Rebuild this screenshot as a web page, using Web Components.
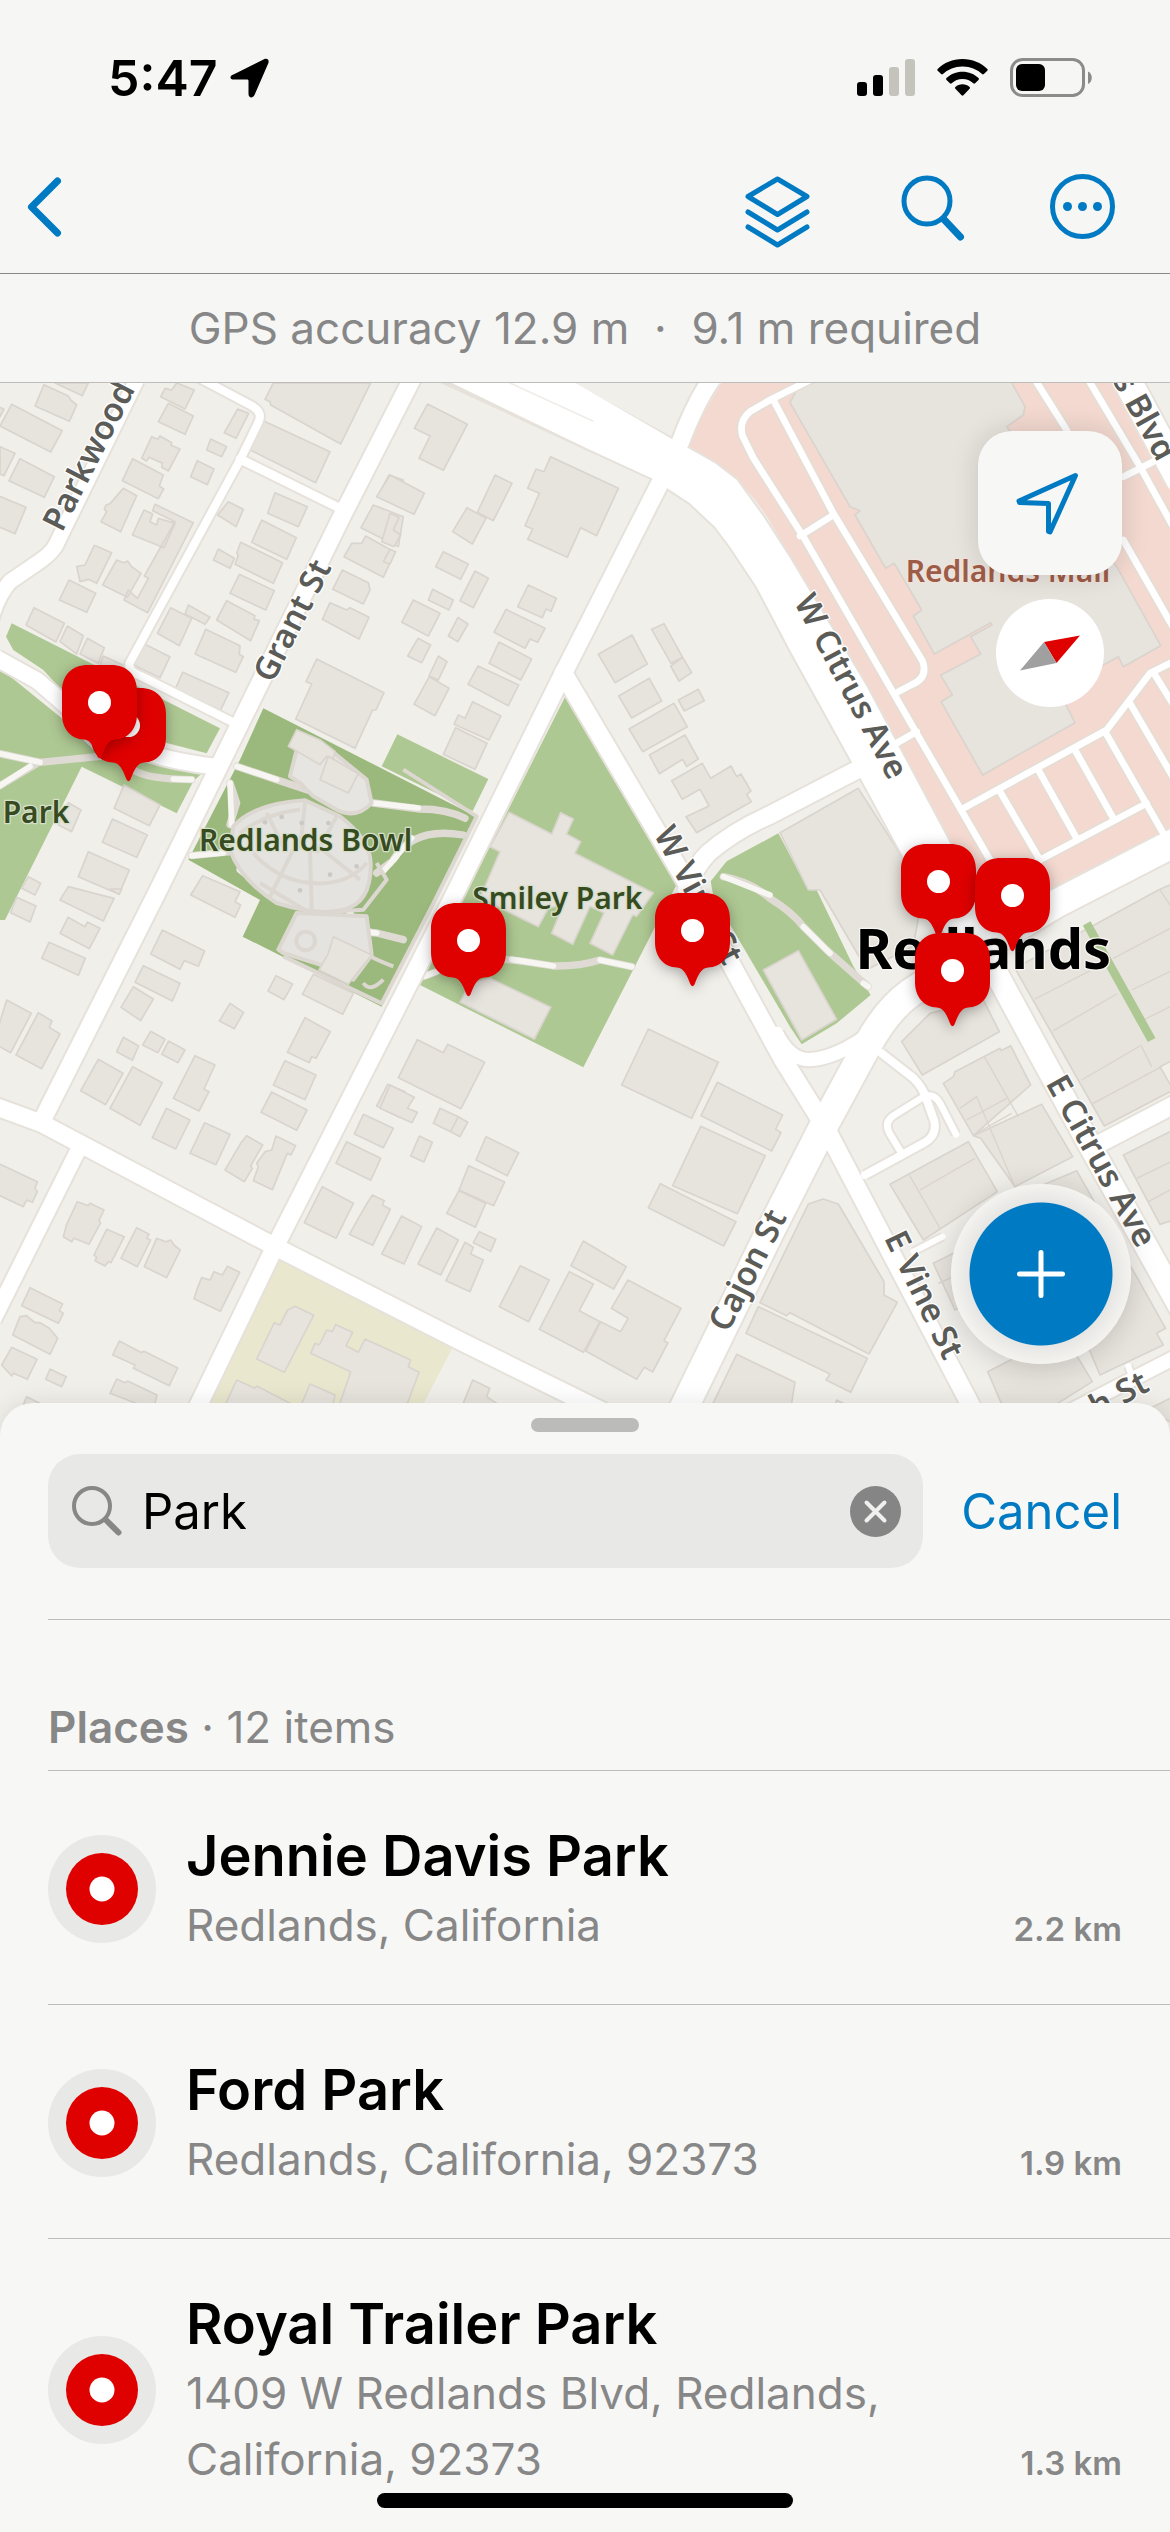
<!DOCTYPE html>
<html lang="en">
<head>
<meta charset="utf-8">
<meta name="viewport" content="width=device-width, initial-scale=1">
<title>Map</title>
<style>
  html, body { margin: 0; height: 100%; }
  body {
    font-family: Inter, "Liberation Sans", sans-serif;
    color: #000;
    background: #f7f7f5;
  }
</style>
</head>
<body>
<map-app>
  <status-bar slot="top">5:47</status-bar>
  <nav-bar slot="top"></nav-bar>
  <accuracy-banner slot="top">GPS accuracy 12.9 m &nbsp;·&nbsp; 9.1 m required</accuracy-banner>
  <street-map slot="map">
    <map-pin x="128" y="398"></map-pin>
    <map-pin x="99" y="375"></map-pin>
    <map-pin x="468" y="613"></map-pin>
    <map-pin x="692" y="603"></map-pin>
    <map-pin x="938" y="554"></map-pin>
    <map-pin x="1012" y="568"></map-pin>
    <map-pin x="952" y="643"></map-pin>
  </street-map>
  <result-sheet slot="sheet">
    <search-field slot="search" value="Park"></search-field>
    <span slot="title">Places</span>
    <span slot="count">12 items</span>
    <place-row>
      <span slot="name">Jennie Davis Park</span>
      <span slot="address">Redlands, California</span>
      <span slot="distance">2.2 km</span>
    </place-row>
    <place-row>
      <span slot="name">Ford Park</span>
      <span slot="address">Redlands, California, 92373</span>
      <span slot="distance">1.9 km</span>
    </place-row>
    <place-row>
      <span slot="name">Royal Trailer Park</span>
      <span slot="address">1409 W Redlands Blvd, Redlands, California, 92373</span>
      <span slot="distance">1.3 km</span>
    </place-row>
  </result-sheet>
</map-app>

<script>
function define(name, html, setup) {
  const template = document.createElement('template')
  template.innerHTML = html
  customElements.define(name, class extends HTMLElement {
    constructor() {
      super()
      this.attachShadow({ mode: 'open' }).appendChild(template.content.cloneNode(true))
    }

    connectedCallback() {
      if (setup) setup(this, this.shadowRoot)
    }
  })
}

define('map-app', `
  <style>
    :host {
      display: flex;
      flex-direction: column;
      position: relative;
      min-height: 100vh;
      overflow: hidden;
    }
    .sheet { flex: 1; display: grid; grid-template-columns: minmax(0, 1fr); margin-top: -30px; position: relative; }
    .home {
      position: absolute;
      left: 50%;
      bottom: 24px;
      width: 416px;
      height: 15px;
      margin-left: -208px;
      border-radius: 8px;
      background: #000;
    }
  </style>
  <slot name="top"></slot>
  <slot name="map"></slot>
  <div class="sheet"><slot name="sheet"></slot></div>
  <div class="home"></div>
`)

define('status-bar', `
  <style>
    :host {
      display: flex;
      align-items: center;
      justify-content: space-between;
      height: 60px;
      padding: 48px 78px 30px 108px;
      background: #f6f6f4;
      font-size: 50px;
      line-height: 60px;
      font-weight: 600;
    }
    div { display: flex; align-items: center; gap: 12px; }
    .right { gap: 22px; }
    svg { display: block; }
  </style>
  <div>
    <slot></slot>
    <svg width="40" height="40" viewBox="0 0 40 40"><path d="M3.5 16.5 34 1.3c3.2-1.5 5.6.7 4.3 4L24.5 37c-1.6 3.6-6 3-6-1V23c0-1-.5-1.500-1.500-1.500H4c-4.500 0-4.800-3.500-.5-5z"/></svg>
  </div>
  <div class="right">
    <svg width="58" height="38" viewBox="0 0 58 38">
      <rect y="23" width="10" height="14" rx="3"/>
      <rect x="16" y="16" width="10" height="21" rx="3"/>
      <rect x="32" y="8" width="10" height="29" rx="3" fill="#c4c4bc"/>
      <rect x="48" width="10" height="37" rx="3" fill="#c4c4bc"/>
    </svg>
    <svg width="51" height="38" viewBox="0 0 51 38">
      <path d="M25.5 0C35.5 0 44 3.7 50.3 10c.6.6.6 1.2 0 1.8l-3.4 3.3c-.6.6-1.2.6-1.8 0A28 28 0 0 0 25.5 7.5 28 28 0 0 0 5.9 15.1c-.6.6-1.2.6-1.8 0L.7 11.8c-.6-.6-.6-1.2 0-1.8C7 3.7 15.5 0 25.5 0z"/>
      <path d="M25.5 12.8c6.3 0 12 2.3 16 6.3.6.6.6 1.2 0 1.8l-3.4 3.4c-.6.6-1.2.6-1.8 0a15.5 15.5 0 0 0-21.6 0c-.6.6-1.2.6-1.8 0l-3.4-3.4c-.6-.6-.6-1.2 0-1.8 4-4 9.7-6.3 16-6.3z"/>
      <path d="M25.5 25.2c2.8 0 5.3 1 7.1 2.7.6.6.6 1.2 0 1.8l-6.2 6.6c-.6.6-1.2.6-1.8 0l-6.2-6.6c-.6-.6-.6-1.2 0-1.8 1.8-1.7 4.3-2.7 7.1-2.7z"/>
    </svg>
    <svg width="82" height="40" viewBox="0 0 82 40">
      <rect x="1.5" y="1.5" width="72" height="36" rx="11" fill="none" stroke="#8b8b8c" stroke-width="3"/>
      <rect x="6" y="6" width="29" height="27" rx="6"/>
      <path d="M78 13.5c5 2 5 10.5 0 12.5z" fill="#8b8b8c"/>
    </svg>
  </div>
`)

define('nav-bar', `
  <style>
    :host {
      display: flex;
      align-items: center;
      height: 135px;
      padding: 0 51px 0 9px;
      background: #f6f6f4;
      border-bottom: 1px solid #88888a;
    }
    .tools { display: flex; gap: 81px; margin-left: auto; }
    button { display: block; margin: 0; padding: 0; border: 0; background: none; color: #007ac2; }
    svg { display: block; fill: none; stroke: currentColor; stroke-width: 5; stroke-linecap: round; stroke-linejoin: round; }
  </style>
  <button aria-label="Back">
    <svg width="72" height="84" viewBox="0 0 72 84"><path d="M48.500 17 22.500 43l26 26" stroke-width="7"/></svg>
  </button>
  <div class="tools">
    <button aria-label="Layers">
      <svg width="72" height="84" viewBox="0 0 72 84">
        <path d="M36.500 15 66 32.500 36.500 50.500 7 32.500zM7 48l29.500 18L66 48M7 63l29.500 18L66 63"/>
      </svg>
    </button>
    <button aria-label="Search">
      <svg width="72" height="84" viewBox="0 0 72 84">
        <circle cx="33" cy="37" r="23"/>
        <path d="m50.500 56 16 17" stroke-width="7"/>
      </svg>
    </button>
    <button aria-label="More">
      <svg width="72" height="84" viewBox="0 0 72 84">
        <circle cx="35.500" cy="42.500" r="30"/>
        <g fill="#007ac2" stroke="none"><circle cx="20.500" cy="42.500" r="4.500"/><circle cx="35.500" cy="42.500" r="4.500"/><circle cx="50.500" cy="42.500" r="4.500"/></g>
      </svg>
    </button>
  </div>
`)

define('accuracy-banner', `
  <style>
    :host {
      display: block;
      padding: 21px 24px;
      background: #f6f6f4;
      border-bottom: 1px solid #bcbcba;
      color: #878788;
      font-size: 44px;
      line-height: 66px;
      text-align: center;
    }
  </style>
  <slot></slot>
`)

define('map-pin', `
  <style>
    /* anchored at its tip */
    :host { position: absolute; width: 75px; height: 93px; margin: -93px 0 0 -37px; }
    svg { display: block; overflow: visible; filter: drop-shadow(0 3px 7px rgba(0, 0, 0, .32)); }
  </style>
  <svg width="75" height="93" viewBox="0 0 75 93">
    <path fill="#df0000" d="M26 0h23c16 0 26 10 26 26v23c0 15-9 25-22 25.500-7 .5-10 8-13.500 17Q37.500 95 35.500 91.500C32 82.500 29 75 22 74.500 9 74 0 64 0 49V26C0 10 10 0 26 0z"/>
    <circle cx="37.500" cy="37.500" r="11.500" fill="#fff"/>
  </svg>
`, el => {
  // x / y are in the map's own 1170 x 1050 grid
  el.style.left = `calc(${el.getAttribute('x')} / 1170 * 100%)`
  el.style.top = `calc(${el.getAttribute('y')} / 1050 * 100%)`
})

// Streets: [path, width]. Each is stroked twice, casing first.
const streets = [
  ['M410-9 165 491Q150 515 110 541L30 596Q-10 641-30 721', 44],
  ['M590-19 755 68Q790 88 775 118L720 231 388 841Q385 865 420 878L700 1018', 24],
  ['M720 228 1020 376', 26],
  ['M-10 826 110 892C230 985 300 1110 640 1150', 48],
  ['M1240-20 1030 391 475 1521 125 2215', 52],
  ['M240 2290-20 2810', 46],
  ['M-20 2168 125 2221 825 2591 1385 2876 1960 3160', 52],
  ['M1985 290 1680 891 1360 1541 825 2591 550 3160', 52],
  ['M1690 871 2050 1481 2350 2031 2475 2231 2940 3120', 54],
  ['M2000 3180 2310 2546 2475 2221 2600 1991Q2660 1881 2730 1831L2870 1741 3170 1561 3530 1376', 84],
  ['M2570 1161 2310 1296Q2200 1345 2125 1410 2085 1450 2060 1520', 52],
  ['M2330 1951Q2370 2032 2430 2030 2510 2025 2610 1951', 40],
  ['M2900 1600 3000 1791 3255 2261 3550 2790', 68],
  ['M3300 2281 3530 2161', 52],
  ['M3200 3090 3530 2920', 42],
  ['M2135-12Q2085 60 2040 180', 52],
  ['M3375-20 3540 290', 84],
  ['M2645 2011 2740 2085Q2770 2115 2780 2150L2803 2215Q2812 2258 2770 2281L2595 2376', 24],
  ['M2868 2254 2820 2161Q2800 2125 2765 2145L2685 2195Q2650 2215 2668 2250L2705 2311', 20],
  ['M2740 2606 2828 2561', 18],
  ['M3385 2950 3400 2990', 18]
]

const drives = `
  M2440-14 2310 51 2250 86Q2215 115 2228 160L2260 225 2410 461 2750 1051 3010 1500
  M2320 51 2500 391 2768 835Q2785 885 2735 905L2690 929 M2500 396 2400 459 M2750 1046 2680 1086
  M3105-10 3200 141 M3265-10 3420 251 3530 450 M3370 281 3470 231 M3370 471 3530 751
  M2890 1276 3320 1041 3450 871 3530 831 M3000 1226 3120 1431 M3115 1161 3230 1366
  M3225 1101 3340 1306 M3315 1046 3490 1351 M3390 961 3530 1201 M3465 876 3530 981
  M3100 1441 3440 1261`

const buildings = [
  [0, -9, `M132 14 205 48 212 60 230 75 208 124 105 78zM35 73 187 152 152 216 0 138zM165 9 247 47 265 9zM-5 80 12 88 0 110z
    M0 200 45 220 12 287 0 282zM60 236 163 290 133 352 27 302zM-5 347 78 382 45 461-5 440zM530 9 583 30 555 87 482 50 495 25 515 30z
    M505 70 580 108 555 163 475 125zM713 87 746 100 708 175 673 158zM632 177 680 200 665 230 620 210zM592 242 642 267 622 314 572 290z
    M455 170 473 178 480 168 515 188 513 196 540 207 505 273 485 262 487 250 447 232 440 243 425 235zM398 236 490 285 478 318 491 327 475 356 367 302z
    M370 325 410 347 362 455 303 425 320 395 313 388 318 375 330 371zM432 390 458 402 450 425 470 435 475 415 525 430 492 503 397 465z
    M465 373 580 428 443 698 372 660 385 630 412 655 445 595 433 588 525 425 458 392zM283 496 335 518 290 610 265 598 240 605 230 560 255 555z
    M350 540 372 548 383 543 395 560 423 580 382 652 308 615zM207 600 287 640 260 697 178 660zM102 683 193 730 168 786 78 735z
    M202 738 250 767 230 822 180 785zM262 775 313 803 295 850 240 822zM310 828 390 865 370 900 295 870zM685 365 730 388 708 440 653 405z
    M825 338 922 380 895 440 803 400zM785 420 889 473 860 538 755 487zM655 507 703 535 690 565 640 540zM722 487 848 548 820 610 705 553 715 525 710 520z
    M718 583 823 632 797 690 690 640zM680 662 765 707 762 718 778 722 752 782 650 720zM565 675 630 712 615 733 555 702zM512 683 575 715 538 797 472 760z
    M617 748 720 797 718 823 730 830 707 877 585 822zM433 792 510 830 480 893 400 855zM548 877 687 938 662 990 622 972 615 982 520 940z
    M820 9 1112 9 1022 192 812 75 810 65 795 58zM790 122 990 215 947 308 745 207zM1167 285 1210 300 1200 380 1135 347z
    M1120 375 1210 410 1195 500 1083 443zM1097 468 1185 517 1150 592 1032 530 1055 490 1085 490zM1027 570 1105 608 1110 630 1090 672 998 628z
    M990 668 1040 690 1050 683 1107 712 1077 777 967 718zM950 837 1152 938 1128 990 1118 990 1065 1105 887 1017 935 912 918 905z
    M372 1215 480 1275 448 1337 342 1285zM337 1317 442 1365 410 1432 307 1387zM265 1415 388 1470 357 1543 235 1490zM205 1268 243 1290 215 1355 175 1335z
    M85 1490 122 1510 105 1545 65 1525zM608 1487 720 1535 705 1565 722 1575 705 1612 572 1545z`],
  [1170, -9, `M113 72 232 133 160 271 87 235 120 168 73 145zM0 285 103 340 72 403-40 350zM0 400 27 412 10 450 32 465 12 500-25 485z
    M0 508 17 515 0 552-20 545zM315 285 366 310 310 422 262 397zM231 383 288 415 247 492 188 455z
    M482 230 685 325 620 467 572 443 532 532 413 478 428 447 405 437 448 340 413 325 438 267 462 275zM160 515 235 552 212 598 137 560z
    M255 573 295 595 250 683 210 662zM128 628 190 660 177 690 115 660zM70 660 150 700 115 768 35 727zM204 712 234 732 204 785 175 768z
    M84 775 122 795 95 848 53 828zM145 828 171 845 145 900 117 888zM118 890 177 925 135 1007 72 973z
    M415 615 499 655 483 694 468 687 457 713 383 680zM348 688 465 745 443 787 420 777 405 805 312 757zM327 786 425 837 392 900 297 850z
    M264 858 386 915 355 977 234 913zM248 965 333 1008 297 1080 192 1033 205 1005 225 1015zM197 1043 291 1090 255 1168 160 1123z
    M726 765 772 852 675 908 625 823zM822 731 878 832 843 850 785 748zM878 832 905 878 867 903 842 858zM778 895 815 963 725 1014 686 948z
    M925 928 943 962 883 993 865 960zM852 970 892 1040 758 1115 717 1047zM885 1065 925 1137 890 1160 878 1138 808 1181 778 1125z
    M937 1150 962 1195 1023 1158 1040 1190 1053 1182 1083 1233 1070 1243 1084 1265 920 1358 888 1310 957 1278 930 1228 877 1258 845 1202z`],
  [0, 1521, `M205-10 342 25 310 93 180 30zM330-3 365-3 357 13zM50 22 108 48 90 96 32 68zM204 82 255 110 262 96 300 115 268 176 180 130z
    M147 157 256 205 235 256 125 205zM20 330 94 370 32 488-20 460zM115 368 156 393 148 412 180 432 125 536 48 495z
    M487 120 614 183 595 229 553 212 540 238 452 192zM430 227 540 280 517 333 405 277zM400 290 460 327 422 392 363 352z
    M828 257 878 282 852 329 804 303zM690 340 731 367 703 416 658 393zM370 442 416 468 397 511 350 485zM452 424 495 448 474 488 428 465z
    M506 453 555 480 534 518 485 493zM295 508 369 550 317 644 242 602zM398 530 487 578 420 706 330 655z
    M585 497 645 525 612 597 627 605 597 663 520 625zM499 655 570 690 527 777 457 743zM614 698 690 733 648 824 570 790z
    M740 737 788 765 752 828 757 835 733 875 675 840 722 760zM828 738 887 767 873 795 862 790 817 899 760 872 775 830 770 820 795 785 815 780z
    M915 383 991 425 948 505 935 500 928 518 862 487zM855 512 948 555 915 629 820 585zM815 606 921 660 890 721 783 667z
    M1163 583 1215 605 1200 683 1130 648zM1090 673 1180 715 1150 773 1063 732zM1040 755 1142 805 1112 871 1008 820z
    M967 890 1060 940 1008 1045 913 998zM1117 915 1153 932 1147 945 1171 958 1118 1066 1048 1033 1095 950z
    M-5 820 112 875 105 895 112 905 97 937 80 930 70 950-5 915zM232 935 265 947 270 940 312 960 297 992 302 998 267 1063 222 1045 215 1055 190 1040 200 1003z
    M320 1018 373 1040 333 1118 325 1115 315 1128 285 1112 290 1102 282 1095zM410 1013 447 1033 440 1045 452 1050 412 1130 363 1105z
    M470 1045 498 1055 512 1050 522 1065 541 1080 500 1163 433 1130zM682 1129 719 1147 661 1264 582 1226 592 1195 605 1163 630 1170 642 1145 667 1155z
    M90 1193 188 1242 178 1262 190 1270 175 1300 65 1247zM60 1280 80 1277 105 1298 120 1298 148 1315 173 1345 150 1393 38 1335z
    M35 1372 111 1408 82 1468 40 1450 35 1458 5 1425zM150 1437 199 1460 185 1490 137 1468zM358 1353 422 1387 432 1384 533 1434 508 1487 400 1435 405 1425 338 1395z
    M350 1467 375 1478 383 1473 471 1515 460 1560 330 1510zM80 1520 130 1545 60 1570zM885 1249 941 1276 853 1447 770 1407 823 1298 840 1305 863 1260z
    M1007 1304 1058 1327 1038 1367 1075 1387 1095 1347 1232 1410 1225 1430 1257 1447 1200 1600 1000 1600 1052 1445 932 1390 945 1360 958 1365 980 1320 997 1325z
    M710 1470 765 1495 770 1488 870 1540 870 1600 650 1600zM930 1482 1005 1515 985 1600 880 1600z`],
  [1170, 1521, `M82 449 160 488 173 463 284 517 213 656 25 563zM0 585 73 622 52 655 82 667 66 698-30 655zM150 655 205 680 182 725 130 700z
    M205 680 233 697 210 740 182 725zM88 738 127 757 102 816 62 798zM288 740 386 788 352 857 258 810zM236 827 344 876 311 947 207 900z
    M207 902 287 940 256 1012 170 970zM35 978 95 1010 42 1122-25 1092zM140 1014 205 1050 152 1155 84 1122z
    M225 1057 250 1072 242 1092 280 1110 240 1205 168 1172zM268 1025 317 1048 302 1084 250 1058zM775 417 985 517 905 685 695 585z
    M982 577 1178 675 1157 717 1173 728 1145 783 933 677zM932 709 1126 797 1042 971 848 887zM811 881 1038 995 1001 1068 775 953z
    M580 1053 709 1130 671 1197 543 1127zM391 1127 478 1170 416 1295 328 1250zM538 1145 610 1182 568 1262 630 1295 580 1387 448 1318z
    M714 1170 873 1255 822 1352 834 1358 788 1446 763 1432 740 1468 587 1383 632 1295 692 1325 714 1285 664 1255z
    M248 1470 299 1495 290 1520 320 1540 300 1600 195 1600zM1040 1393 1215 1477 1195 1600 940 1600z`],
  [2310, 1521, `M160 927 205 942 342 1175 342 1215 382 1237 297 1392 60 1268 50 1277-30 1238 115 942zM-35 1250 292 1405 242 1507 168 1470 180 1452-72 1330z
    M395 455 480 370 640 330 688 425 457 555zM555 545 690 475 693 482 722 467 782 585 610 737 520 580 550 560zM610 737 815 643 908 800 735 890 632 745z
    M360 883 595 755 682 905 460 1050zM490 1120 650 1040 730 1180 555 1260z
    M735 235 1165 0 1210-20 1210 510 1170 530 1210 600 1003 708zM1060 795 1210 720 1210 990 1170 1003z
    M653 1445 880 1330 967 1475 800 1580 720 1600zM760 910 920 842 1187 1315 1160 1330 1180 1365 990 1455zM1130 1560 1210 1520 1210 1600z
    M200 1530 280 1570 180 1600z`]
]

const mapSvg = `
  <svg viewBox="0 0 3510 3150" preserveAspectRatio="xMidYMin slice" role="img" aria-label="Street map of Redlands">
    <rect width="3510" height="3150" fill="#f1efea"/>
    <path fill="#f3d9d0" d="M2170-10 2105 100 2060 190Q2210 260 2300 400L2600 911 2860 1400 3060 1600 3510 1360V310L3330-10z"/>
    <path fill="#aec893" d="M35 721 660 1036 620 1111 500 1080 300 1000 180 916 130 861 40 801 18 761zM0 856 180 1001 280 1100 640 1140 580 1195 530 1291 245 1151 80 1481 15 1611 0 1611z
      M1192 1054 1465 1188 1418 1284 1145 1150zM1703 926 2035 1495 1750 2053 1260 1806z
      M2335 1351 2180 1435 2132 1495 2140 1540 2370 1931 2405 1984 2510 1921 2612 1836 2560 1750 2450 1521 2425 1521z"/>
    <path fill="#9bb97c" d="M790 976 1430 1301 1145 1871 728 1661 780 1551 565 1430 720 1130z"/>
    <path fill="#e9e7cd" d="M835 2626 1358 2893 1220 3160 580 3160z"/>

    <g fill="none" stroke="#dfdbd4" stroke-width="22" stroke-linecap="round" stroke-linejoin="round">
      <path d="M0 1112 120 1138 300 1120M0 1208 110 1142M400 1160Q440 1188 575 1190M710 1150 830 1190 950 1230M690 1200 710 1260 690 1325M575 1418 700 1405
        M720 1460 820 1540M1120 1260 1260 1278Q1340 1278 1395 1306M1180 1430Q1240 1330 1390 1356M1045 1581Q1075 1650 1130 1650L1210 1670M1170 1440 1130 1470
        M1270 1781 1310 1766M1515 1729 1570 1735 1660 1749Q1740 1750 1800 1731L1895 1751M2170 1481Q2250 1495 2310 1546 2380 1590 2410 1631L2480 1701 2605 1811"/>
      <path stroke="#f7f6f2" stroke-width="17" d="M0 1112 120 1138M0 1208 90 1150M520 1188 575 1190M710 1150 830 1190M690 1200 695 1325M575 1418 670 1410M720 1460 820 1540M1120 1260 1255 1275M1180 1430 1235 1365
        M1045 1581Q1075 1650 1130 1650M1150 1465 1190 1420M1275 1779 1310 1766M1535 1729 1660 1749M1800 1731 1895 1751M2170 1481 2310 1536M2410 1631 2490 1711M2590 1801 2605 1811"/>
    </g>

    <g stroke="#dcd7d0" stroke-width="12" stroke-linejoin="round">
      <path fill="#e6e5e2" d="M870 1180 900 1060 990 1100 1100 1190 1115 1260Q1070 1310 1010 1280L940 1240 900 1200z"/>
      <path fill="#e4e3e0" d="M700 1330Q760 1262 915 1252L1020 1300Q1110 1370 1112 1440 1115 1560 1030 1580 960 1600 830 1560 720 1490 690 1400z"/>
      <path fill="#e4e3e0" d="M890 1590 1100 1600 1115 1716 1060 1790 960 1745 850 1710 835 1700z"/>
      <path fill="none" d="M760 1410Q830 1490 930 1500 1040 1510 1100 1440M720 1350Q800 1290 900 1280M850 1390 800 1290M900 1400 915 1260M950 1410 1010 1300M880 1400 810 1540M930 1400 935 1580M960 1395 1080 1490M1130 1440 1160 1490 1090 1580 930 1590 780 1500"/>
      <circle cx="917" cy="1674" r="28" fill="none"/>
      <path fill="none" d="M1210 1160 1430 1300 1300 1561 1145 1861 850 1720M1110 1720Q1150 1740 1180 1750M1090 1800Q1110 1830 1150 1790"/>
    </g>
    <g fill="#c9c9c6"><circle cx="795" cy="1318" r="7"/><circle cx="845" cy="1302" r="7"/><circle cx="985" cy="1320" r="7"/><circle cx="905" cy="1320" r="7"/><circle cx="1040" cy="1400" r="7"/><circle cx="1070" cy="1450" r="7"/><circle cx="900" cy="1522" r="7"/><circle cx="990" cy="1475" r="7"/></g>

    <g stroke-linejoin="round">
      <g fill="#e7e3dd" stroke="#d9d4cd" stroke-width="5">
        <path d="M890 1040 960 1070 1005 1105 1000 1125 980 1120 960 1145 865 1090zM985 1120 1075 1172 1045 1230 960 1190zM1000 1661 1115 1716 1070 1771 1045 1804 957 1761 985 1711zM940 1774 1060 1831 1028 1894 907 1834z"/>
        <path d="M1527 1288 1655 1353 1682 1289 1720 1308 1700 1353 1742 1376 1725 1411 1960 1530 1910 1600 1898 1596 1838 1716 1770 1681 1812 1590 1770 1570 1718 1684 1655 1651 1690 1565 1645 1575 1615 1631 1440 1545 1500 1406 1470 1391z
          M1470 1786 1652 1873 1603 1968 1380 1858 1410 1800zM2575 1216 2340 1349 2425 1521 2460 1521 2600 1760 2740 1690 2770 1521zM2395 1703 2510 1909 2405 1971 2290 1761z"/>
        ${buildings.map(([x, y, d]) => `<path transform="translate(${x} ${y})" d="${d}"/>`).join('')}
        <path d="M2420-10 2390 21 2370 59 2550 371 2580 383 2565 396 2657 556 2683 541 2765 681 2740 699 2803 813 2972 719 2976 726 2912 761 2942 813 2822 877 2857 935 2823 956 2948 1176 3225 1019 3190 950 3310 846 3355 821 3370 851 3482 788 3350 551 3020 131 3070 96 3075 71 3030-10z"/>
      </g>
      <path fill="none" stroke="#d9d4cd" stroke-width="4" transform="translate(2310 1521)" d="M795 327 980 232M850 422 1040 312M935 570 1115 465M970 640 1175 530M1085 300 1210 240M1030 205 1210 110M1120 390 1210 345M1170 0 1210 60M1145 530 1115 470
        M643 500 745 680M710 625 590 690M570 655 620 620 735 890M610 735 725 670M418 855 510 1015M450 900 615 805M1100 865 1210 812M1135 935 1210 895M505 1180 640 1120"/>
      <path fill="none" stroke="#aec893" stroke-width="26" d="M3260 1621 3455 1971"/>

      <g fill="none" stroke="#e6e2db">
        ${streets.map(([d, w]) => `<path d="${d}" stroke-width="${w + 12}"/>`).join('')}
        <path d="${drives}" stroke="#e5ded5" stroke-width="30"/>
        <path fill="#e6e2db" stroke-width="12" d="M1325-5 1760 196 1960 288 2070 361 2145 431 2190 491 2270 611 2370 801 2555 1136 2850 1680 3010 1640 2850 1381 2600 911 2370 526 2290 401 2210 291 2145 241 2020 170 1700-5z"/>
      </g>
      <g fill="none" stroke="#fff" stroke-linecap="round">
        <path d="${drives}" stroke-width="20"/>
        ${streets.map(([d, w]) => `<path d="${d}" stroke-width="${w}"/>`).join('')}
        <path fill="#fff" stroke="none" d="M1325-15 1760 196 1960 288 2070 361 2145 431 2190 491 2270 611 2370 801 2555 1136 2850 1680 3010 1640 2850 1381 2600 911 2370 526 2290 401 2210 291 2145 241 2020 170 1700-15z"/>
      </g>
      <path fill="none" stroke="#f0ede8" stroke-width="5" d="M1530 0 1780 115"/>
    </g>

    <g class="road">
      <text transform="translate(186 451) rotate(-63)" text-anchor="start">Parkwood</text>
      <text transform="translate(907 728) rotate(-63)">Grant St</text>
      <text transform="translate(2524 926) rotate(62)">W Citrus Ave</text>
      <text transform="translate(2066 1552) rotate(62)">W Vine St</text>
      <text transform="translate(2742 2750) rotate(64)">E Vine St</text>
      <text transform="translate(3274 2350) rotate(61)">E Citrus Ave</text>
      <text transform="translate(2273 2677) rotate(-63)">Cajon St</text>
      <text transform="translate(3336 -8) rotate(61)" text-anchor="start">s Blvd</text>
      <text transform="translate(3453 3021) rotate(-28)" text-anchor="end">h St</text>
    </g>
    <g class="park">
      <text x="8" y="1321" text-anchor="start">Park</text>
      <text x="917" y="1403">Redlands Bowl</text>
      <text x="1672" y="1579">Smiley Park</text>
      <text x="3024" y="598" class="mall">Redlands Mall</text>
    </g>
    <text x="2950" y="1759" class="city">Redlands</text>
  </svg>`

define('street-map', `
  <style>
    :host { display: block; position: relative; aspect-ratio: 1170 / 1050; overflow: hidden; }
    svg { display: block; }
    .canvas, .canvas > svg { width: 100%; height: 100%; }
    text { font-family: "Noto Sans", "Open Sans", sans-serif; font-weight: 600; font-size: 90px; text-anchor: middle; paint-order: stroke; stroke-linejoin: round; }
    text[text-anchor=start] { text-anchor: start; }
    text[text-anchor=end] { text-anchor: end; }
    .road text { font-size: 99px; fill: #5b5c58; stroke: #fff; stroke-width: 8px; }
    .park text { fill: #374b20; stroke: #d5dfca; stroke-width: 8px; }
    .park .mall { fill: #9d5c47; stroke: #efe3dc; }
    .city { font-size: 168px; font-weight: 700; stroke: #f6f4f0; stroke-width: 8px; }
    .controls {
      position: absolute;
      inset: 0;
      box-sizing: border-box;
      display: flex;
      flex-direction: column;
      align-items: flex-end;
      gap: 24px;
      padding: 48px 39px 69px;
    }
    button { display: grid; place-items: center; border: 0; padding: 0; }
    .locate {
      width: 144px;
      height: 144px;
      margin-right: 9px;
      border-radius: 34px;
      background: #f7f7f5;
      box-shadow: 0 0 28px rgba(0, 0, 0, .14);
    }
    .compass { width: 108px; height: 108px; margin-right: 27px; border-radius: 50%; background: #fff; }
    .add {
      width: 180px;
      height: 180px;
      margin-top: auto;
      border-radius: 50%;
      background: radial-gradient(circle, #007ac2 71px, #e6e6e4 72px, #f4f3f0 90px);
      box-shadow: 0 4px 28px rgba(0, 0, 0, .16);
    }
  </style>
  <div class="canvas">${mapSvg}</div>
  <slot></slot>
  <div class="controls">
    <button class="locate" aria-label="My location">
      <svg width="144" height="144" viewBox="0 0 144 144"><path d="M97.500 44.500 72 101 70.500 100.500V72.500L41.500 71.500 41 70z" fill="none" stroke="#007ac2" stroke-width="5" stroke-linejoin="round"/></svg>
    </button>
    <button class="compass" aria-label="Reset north">
      <svg width="108" height="108" viewBox="0 0 108 108"><path fill="#df0000" d="M84 36.500 48 43l12.500 21z"/><path fill="#a0a0a0" d="M24 71.500 48 43l12.500 21z"/></svg>
    </button>
    <button class="add" aria-label="Add">
      <svg width="48" height="48" viewBox="0 0 48 48"><path d="M24 2.500v43M2.500 24h43" stroke="#fff" stroke-width="5" stroke-linecap="round"/></svg>
    </button>
  </div>
`)

define('search-field', `
  <style>
    :host { display: flex; align-items: center; gap: 38px; font-size: 49px; }
    label {
      flex: 1;
      min-width: 0;
      display: flex;
      align-items: center;
      gap: 20px;
      height: 114px;
      box-sizing: border-box;
      padding: 0 22px 0 24px;
      border-radius: 32px;
      background: #e8e8e6;
    }
    input { flex: 1; min-width: 0; padding: 0; border: 0; outline: 0; background: none; font: inherit; color: #000; }
    button { padding: 0; border: 0; background: none; font: inherit; color: #007ac2; }
    svg { display: block; }
  </style>
  <label>
    <svg width="50" height="50" viewBox="0 0 50 50" fill="none" stroke="#878788" stroke-linecap="round"><circle cx="20" cy="20" r="18" stroke-width="4"/><path d="m34 34 12.500 12.500" stroke-width="6"/></svg>
    <input type="text" aria-label="Search">
    <button aria-label="Clear">
      <svg width="51" height="51" viewBox="0 0 51 51"><circle cx="25.500" cy="25.500" r="25.500" fill="#858586"/><path d="m16.500 16.500 18 18m0-18-18 18" stroke="#f0f0ee" stroke-width="4" stroke-linecap="round"/></svg>
    </button>
  </label>
  <button>Cancel</button>
`, (el, root) => {
  root.querySelector('input').value = el.getAttribute('value')
})

define('result-sheet', `
  <style>
    :host {
      display: block;
      border-radius: 33px 33px 0 0;
      background: #f7f7f5;
      box-shadow: 0 0 24px rgba(0, 0, 0, .1);
    }
    .grip { width: 108px; height: 14px; margin: 0 auto; border-radius: 7px; background: #bbbbb9; }
    .head { padding: 15px 48px 51px; }
    .head ::slotted(*) { margin-top: 22px; }
    h2 {
      margin: 0 0 0 48px;
      padding: 74px 48px 10px 0;
      border: 1px solid #bcbcba;
      border-width: 1px 0;
      color: #878788;
      font-size: 44px;
      line-height: 66px;
      font-weight: 400;
    }
    b { font-weight: 600; }
  </style>
  <div class="head">
    <div class="grip"></div>
    <slot name="search"></slot>
  </div>
  <h2><b><slot name="title"></slot></b> · <slot name="count"></slot></h2>
  <slot></slot>
`)

define('place-row', `
  <style>
    :host {
      display: flex;
      align-items: last baseline;
      gap: 30px;
      margin-left: 48px;
      padding: 49px 48px 46px 0;
      border-bottom: 1px solid #bcbcba;
      color: #878788;
      font-size: 44px;
      line-height: 66px;
    }
    :host(:last-of-type) { border-bottom: 0; padding-bottom: 32px; }
    svg { align-self: center; flex: none; display: block; }
    .text { flex: 1; min-width: 0; }
    .name { color: #000; font-size: 56px; line-height: 72px; font-weight: 600; }
    .distance { font-size: 33px; line-height: 40px; font-weight: 600; white-space: nowrap; }
  </style>
  <svg width="108" height="108" viewBox="0 0 108 108"><circle cx="54" cy="54" r="54" fill="#e8e8e6"/><circle cx="54" cy="54" r="36" fill="#df0000"/><circle cx="54" cy="54" r="12.500" fill="#fff"/></svg>
  <div class="text">
    <div class="name"><slot name="name"></slot></div>
    <div><slot name="address"></slot></div>
  </div>
  <div class="distance"><slot name="distance"></slot></div>
`)
</script>
</body>
</html>
